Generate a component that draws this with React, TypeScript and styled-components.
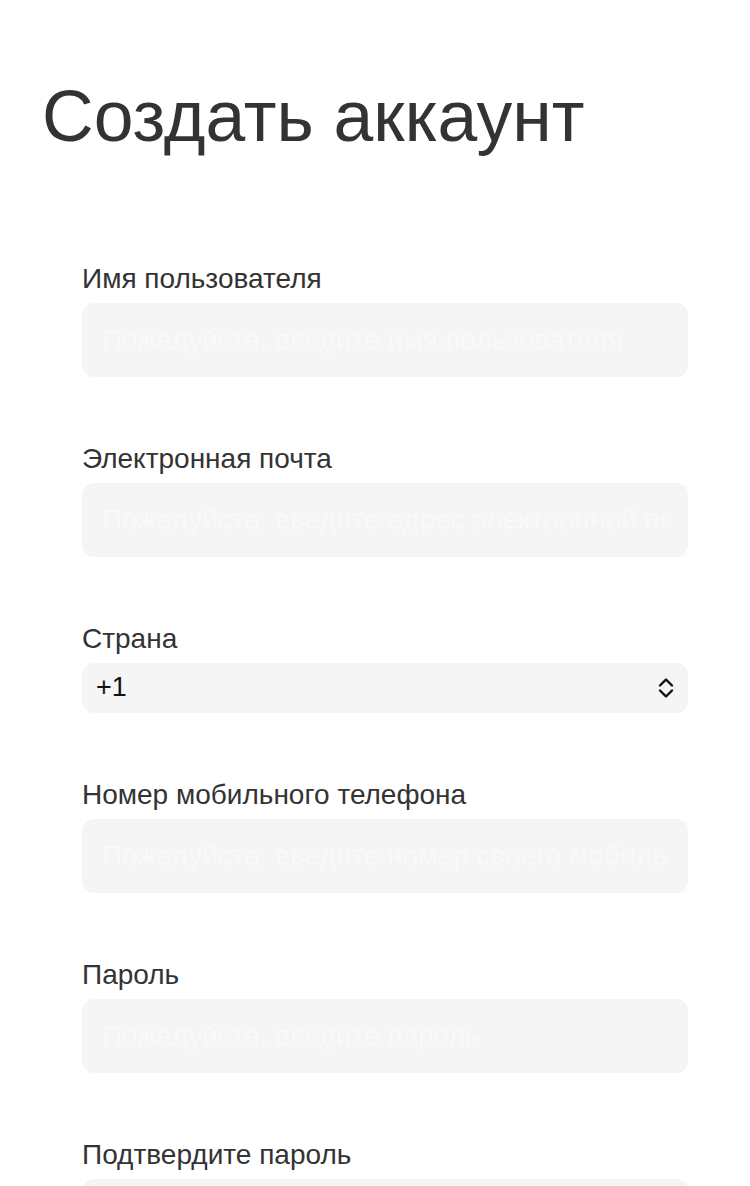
import styled, { createGlobalStyle } from 'styled-components';

const GlobalStyle = createGlobalStyle`
  body {
    margin: 0;
    background: #ffffff;
    font-family: 'Liberation Sans', Arial, sans-serif;
  }
`;

interface Field {
  label: string;
  placeholder: string;
  type: string;
}

const topFields: Field[] = [
  { label: 'Имя пользователя', placeholder: 'Пожалуйста, введите имя пользователя', type: 'text' },
  { label: 'Электронная почта', placeholder: 'Пожалуйста, введите адрес электронной почты', type: 'email' }
];

const bottomFields: Field[] = [
  { label: 'Номер мобильного телефона', placeholder: 'Пожалуйста, введите номер своего мобильного телефона', type: 'tel' },
  { label: 'Пароль', placeholder: 'Пожалуйста, введите пароль', type: 'password' },
  { label: 'Подтвердите пароль', placeholder: 'Пожалуйста, подтвердите пароль', type: 'password' }
];

const ChevronUpDown = () => (
  <svg width="18" height="24" viewBox="0 0 18 24" fill="none">
    <path d="M3 9.5 L9 3.5 L15 9.5" stroke="#111" strokeWidth="2.4" strokeLinecap="round" strokeLinejoin="round" />
    <path d="M3 14.5 L9 20.5 L15 14.5" stroke="#111" strokeWidth="2.4" strokeLinecap="round" strokeLinejoin="round" />
  </svg>
);

const renderField = (field: Field) => (
  <FieldBlock key={field.label}>
    <Label>{field.label}</Label>
    <TextInput type={field.type === 'password' ? 'text' : field.type} placeholder={field.placeholder} />
  </FieldBlock>
);

const App = () => {
  return (
    <Page>
      <GlobalStyle />
      <Title>Создать аккаунт</Title>
      <Form onSubmit={(e) => e.preventDefault()}>
        {topFields.map(renderField)}
        <FieldBlock>
          <Label>Страна</Label>
          <SelectBox>
            <SelectValue>+1</SelectValue>
            <ChevronUpDown />
          </SelectBox>
        </FieldBlock>
        {bottomFields.map(renderField)}
      </Form>
    </Page>
  );
};

const Page = styled.div`
  height: 1186px;
  overflow: hidden;
`;

const Title = styled.h1`
  margin: 0;
  padding: 81px 0 0 42px;
  font-size: 71.5px;
  line-height: 1;
  font-weight: 400;
  color: #333333;
`;

const Form = styled.form`
  display: flex;
  flex-direction: column;
  gap: 68px;
  padding: 112px 62px 0 82px;
`;

const FieldBlock = styled.div`
  display: flex;
  flex-direction: column;
  gap: 10px;
`;

const Label = styled.label`
  font-size: 28px;
  line-height: 1;
  color: #333333;
`;

const TextInput = styled.input`
  box-sizing: border-box;
  width: 100%;
  height: 74px;
  padding: 0 20px;
  border: none;
  border-radius: 12px;
  background: #f5f5f5;
  font-family: 'Liberation Sans', Arial, sans-serif;
  font-size: 28px;
  color: #111111;
  outline: none;

  &::placeholder {
    color: #f9f9f9;
  }
`;

const SelectBox = styled.div`
  box-sizing: border-box;
  display: flex;
  align-items: center;
  justify-content: space-between;
  height: 50px;
  padding: 0 13px 0 14px;
  border-radius: 12px;
  background: #f5f5f5;
`;

const SelectValue = styled.span`
  font-size: 27px;
  color: #111111;
`;

export default App;
